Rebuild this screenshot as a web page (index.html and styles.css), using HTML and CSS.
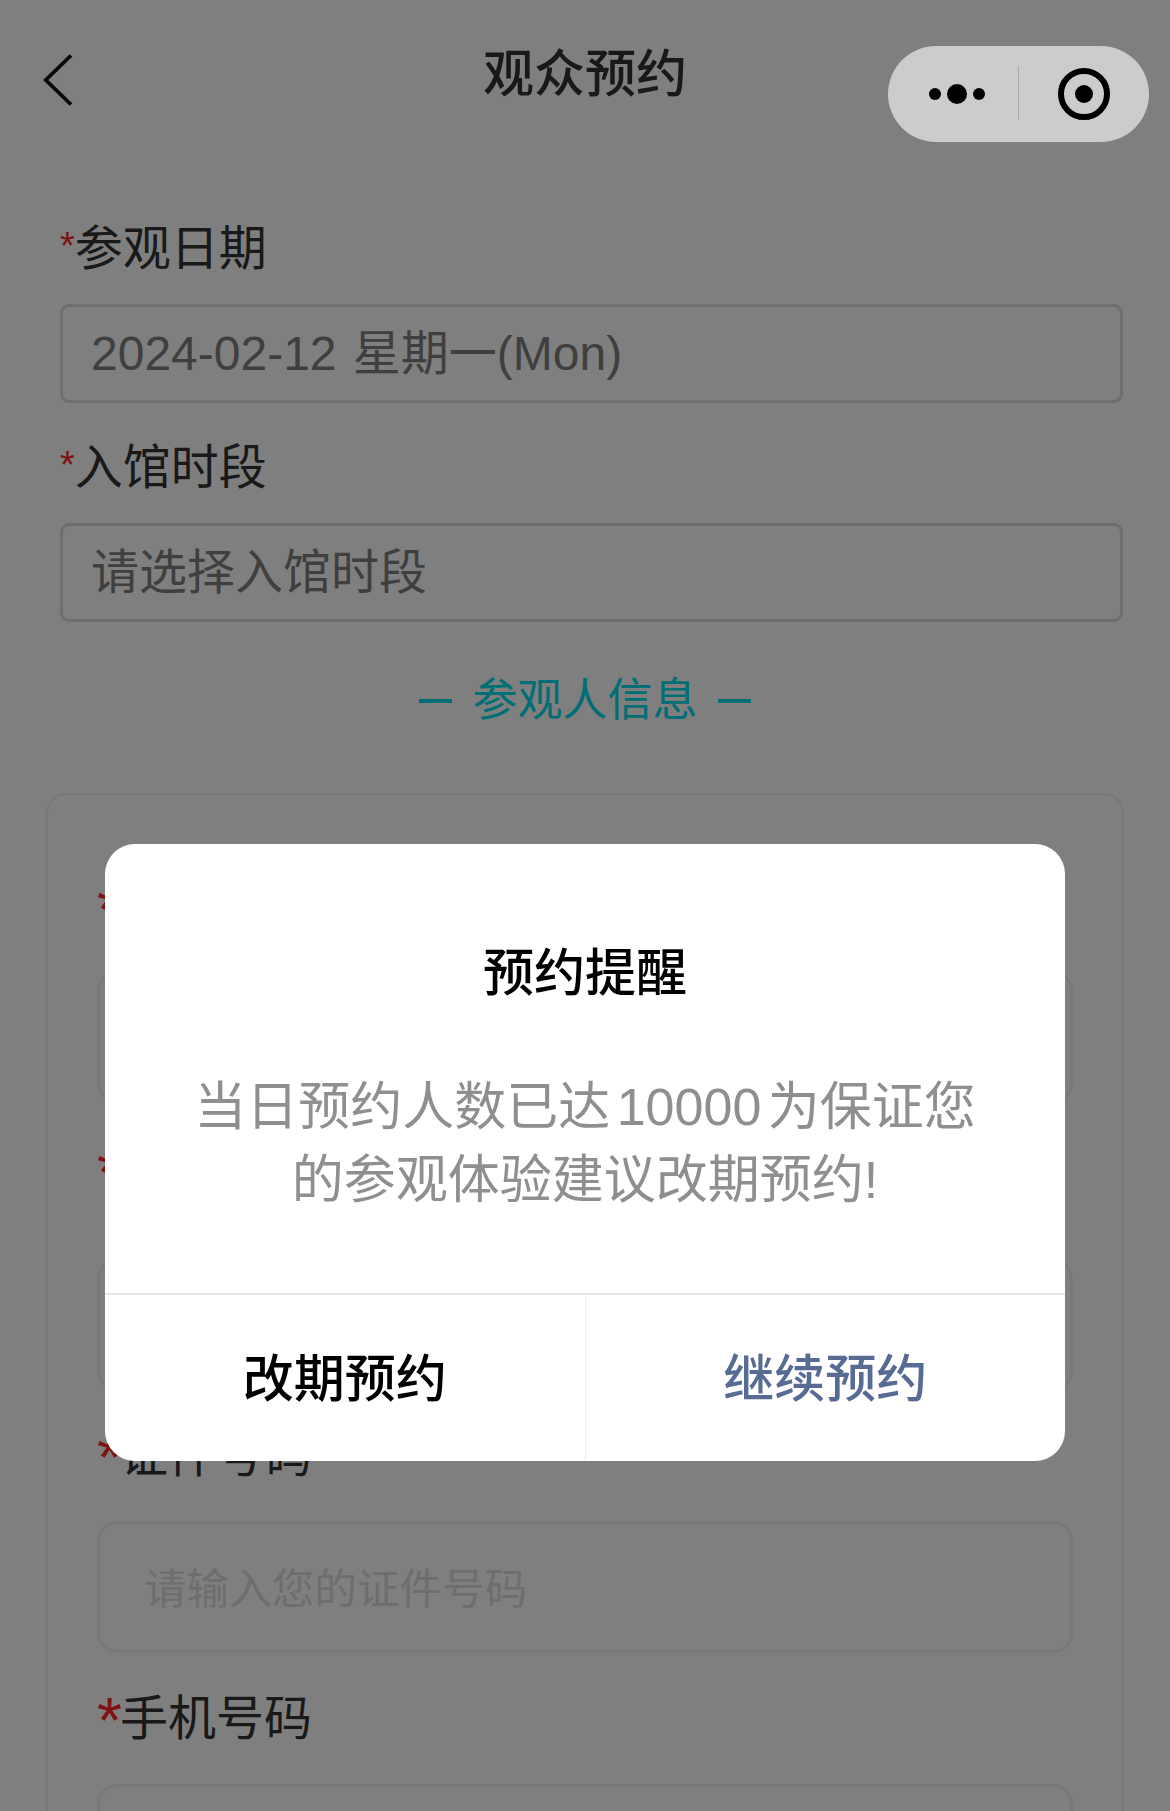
FILE: index.html
```html
<!DOCTYPE html>
<html lang="zh-CN">
<head>
    <meta charset="UTF-8" />
    <meta name="viewport" content="width=device-width, initial-scale=1.0" />
    <title>观众预约</title>
    <link rel="stylesheet" href="styles.css">
</head>

<body>
<div class="page">
    <div class="nav">
        <svg class="back" width="30" height="52" viewBox="0 0 30 52">
            <path d="M28 1.5 L2.8 26 L28 50.5" fill="none" stroke="#111" stroke-width="3.8"/>
        </svg>
        <div class="nav-title">观众预约</div>
    </div>

    <div class="top">
        <div class="label"><span class="star">*</span>参观日期</div>
        <div class="input">2024-02-12 星期一(Mon)</div>
        <div class="label label-next"><span class="star">*</span>入馆时段</div>
        <div class="input">请选择入馆时段</div>
        <div class="section">
            <span class="dash"></span>
            <span>参观人信息</span>
            <span class="dash"></span>
        </div>
    </div>

    <div class="card">
        <div class="card-label first"><span class="star">*</span></div>
        <div class="card-input"></div>
        <div class="card-label second"><span class="star">*</span></div>
        <div class="card-input"></div>
        <div class="card-label"><span class="star">*</span>证件号码</div>
        <div class="card-input">请输入您的证件号码</div>
        <div class="card-label third"><span class="star">*</span>手机号码</div>
        <div class="card-input"></div>
    </div>
</div>

<div class="mask">
    <div class="modal">
        <div class="modal-title">预约提醒</div>
        <div class="modal-text">当日预约人数已达 10000 为保证您<br>的参观体验建议改期预约!</div>
        <div class="modal-btns">
            <div class="btn">改期预约</div>
            <div class="btn btn-primary">继续预约</div>
        </div>
    </div>
</div>

<div class="capsule">
    <div class="cap-btn cap-more">
        <svg width="56" height="20" viewBox="0 0 56 20">
            <circle cx="6" cy="10" r="6"/>
            <circle cx="28" cy="10" r="10"/>
            <circle cx="50" cy="10" r="6"/>
        </svg>
    </div>
    <div class="cap-btn cap-record">
        <svg width="52" height="52" viewBox="0 0 52 52">
            <circle cx="26" cy="26" r="23" fill="none" stroke="#000" stroke-width="6"/>
            <circle cx="26" cy="26" r="9"/>
        </svg>
    </div>
</div>
</body>
</html>
```

FILE: styles.css
```css
* {
    box-sizing: border-box;
}
html,
body {
    margin: 0;
    height: 1811px;
    overflow: hidden;
}
body {
    background: #fff;
    font-family: "Liberation Sans", "Noto Sans CJK SC", sans-serif;
}
.page {
    height: 1811px;
    overflow: hidden;
}
.nav {
    height: 218px;
    position: relative;
    text-align: center;
}
.nav-title {
    padding-top: 45px;
    font-size: 51px;
    line-height: 60px;
    font-weight: 500;
    color: #333;
}
.back {
    position: absolute;
    left: 43px;
    top: 54px;
}

.top {
    padding: 0 47px 0 60px;
}
.label {
    height: 60px;
    font-size: 48px;
    line-height: 62px;
    color: #333;
}
.label-next {
    margin-top: 34px;
}
.star {
    color: #ff2424;
}
.label .star {
    font-size: 38px;
    line-height: 0;
    vertical-align: 6px;
}
.input {
    height: 99px;
    margin-top: 26px;
    padding-left: 28px;
    border: 3px solid #dcdcdc;
    border-radius: 9px;
    font-size: 48px;
    line-height: 93px;
    word-spacing: 3px;
    color: #7e7e7e;
}
.section {
    margin-top: 49px;
    padding-right: 13px;
    display: flex;
    justify-content: center;
    align-items: center;
    gap: 20px;
    font-size: 45px;
    line-height: 60px;
    color: #00dcea;
}
.dash {
    width: 33px;
    height: 4px;
    background: #00dcea;
}

.card {
    margin: 62px 46px 0;
    padding: 0 49px;
    border: 2px solid #efefef;
    border-radius: 20px;
    height: 1200px;
}
.card-label {
    height: 60px;
    margin-top: 35px;
    font-size: 48px;
    line-height: 60px;
    color: #333;
}
.card-label.first {
    margin-top: 83px;
}
.card-label.second {
    margin-top: 38px;
}
.card-label.third {
    margin-top: 36px;
}
.card-label .star {
    font-size: 64px;
    line-height: 0;
    vertical-align: -8px;
    margin-right: -2px;
}
.card-input {
    height: 132px;
    margin-top: 35px;
    padding: 3px 0 0 44px;
    border: 3px solid #f0f0f0;
    border-radius: 20px;
    font-size: 42.6px;
    line-height: 125px;
    color: #ddd;
}
.first + .card-input {
    margin-top: 33px;
}
.second + .card-input {
    margin-top: 58px;
}

.mask {
    position: fixed;
    top: 0;
    left: 0;
    right: 0;
    bottom: 0;
    padding-top: 844px;
    display: flex;
    justify-content: center;
    align-items: flex-start;
    background: rgba(0, 0, 0, .5);
}
.modal {
    width: 960px;
    height: 617px;
    background: #fff;
    border-radius: 30px;
    overflow: hidden;
    text-align: center;
}
.modal-title {
    margin-top: 95px;
    font-size: 51px;
    line-height: 70px;
    font-weight: 500;
    color: #000;
}
.modal-text {
    margin-top: 62px;
    height: 222px;
    font-size: 52px;
    line-height: 73px;
    word-spacing: -8px;
    color: #8f8f8f;
}
.modal-btns {
    display: flex;
    height: 168px;
    border-top: 2px solid #e5e5e5;
}
.btn {
    flex: 1;
    font-size: 51px;
    line-height: 170px;
    font-weight: 500;
    color: #000;
}
.btn-primary {
    border-left: 1px solid #ececec;
    color: #576b95;
}

.capsule {
    position: fixed;
    top: 46px;
    left: 888px;
    width: 261px;
    height: 96px;
    display: flex;
    align-items: center;
    background: #ccc;
    border-radius: 48px;
}
.capsule::after {
    content: "";
    position: absolute;
    left: 130px;
    top: 20px;
    width: 1px;
    height: 55px;
    background: #aaa;
}
.cap-btn {
    width: 130px;
    display: flex;
    justify-content: center;
}
.cap-more {
    padding-left: 8px;
}
.cap-record {
    padding-left: 2px;
}
```
